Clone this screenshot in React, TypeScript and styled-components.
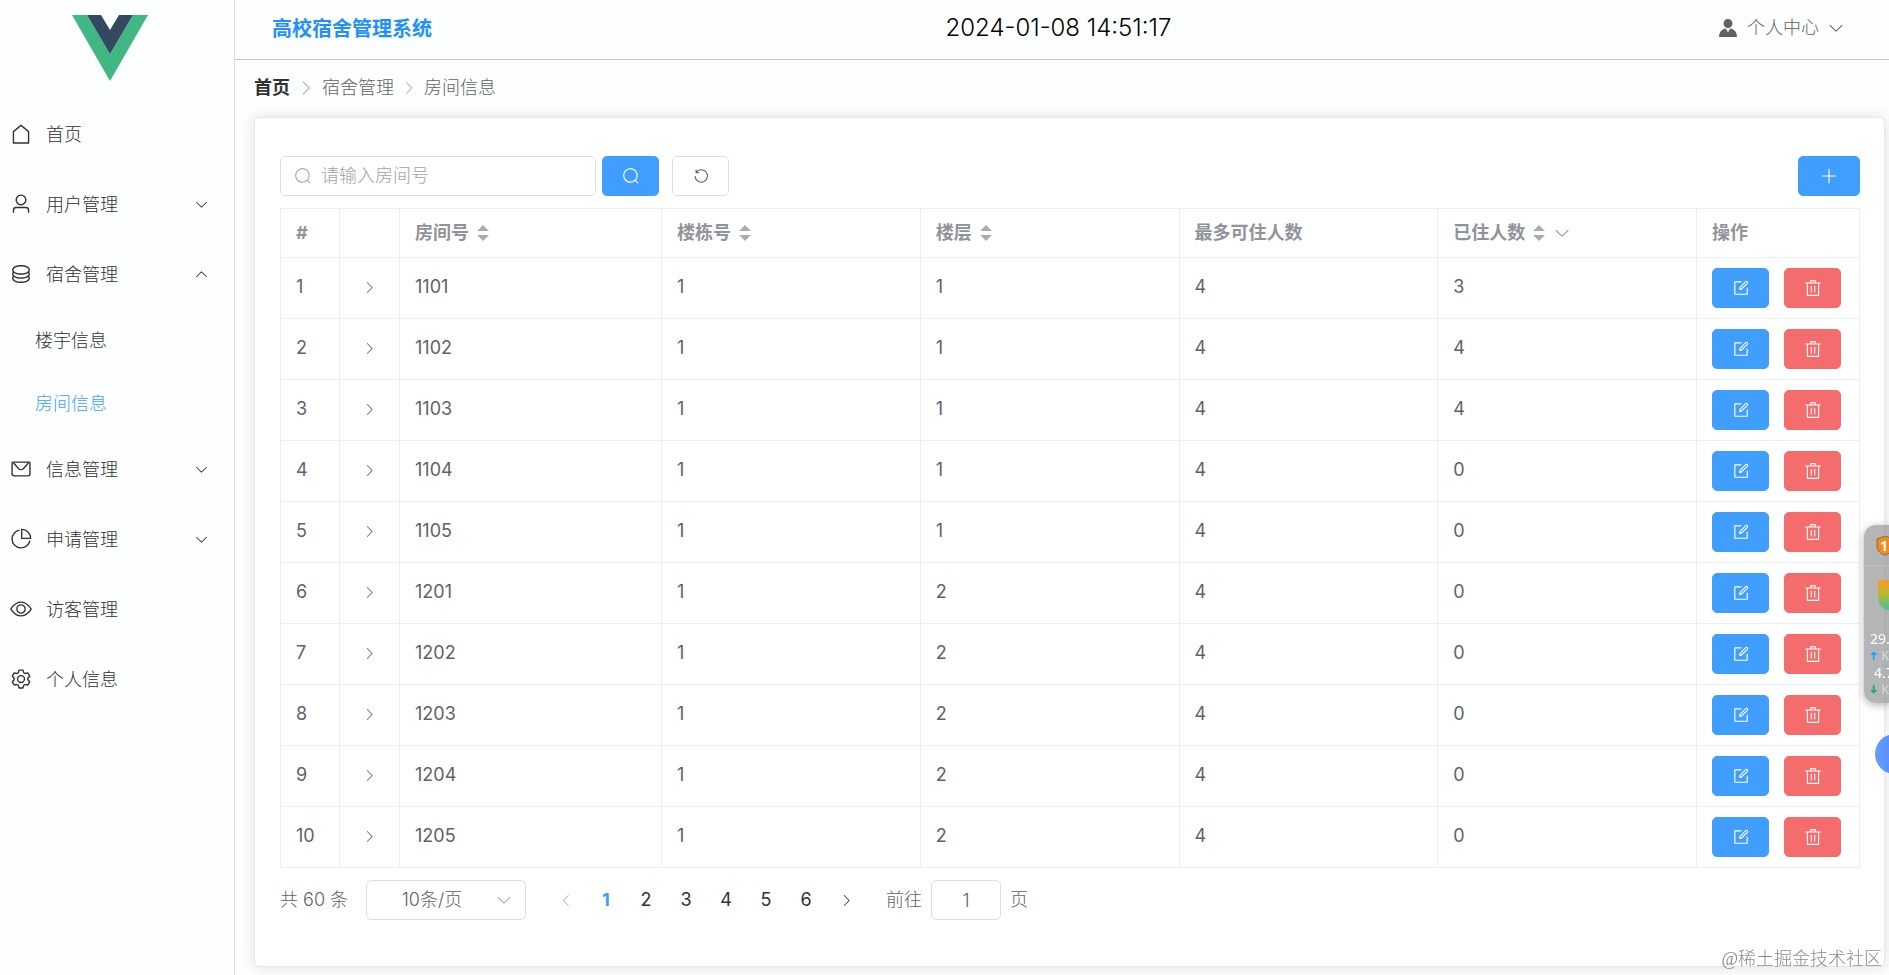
import React, { useState } from 'react';
import styled, { createGlobalStyle, css } from 'styled-components';

const GlobalStyle = createGlobalStyle`
  * { box-sizing: border-box; }
  html, body, #root { min-height: 100vh; }
  body {
    margin: 0;
    overflow: hidden;
    background: #fdfefe;
    color: #606266;
    font: 300 18px/28px Inter, "Noto Sans CJK SC", sans-serif;
  }
  button, input, select { font: inherit; color: inherit; }
  button { cursor: pointer; }
  a { color: inherit; text-decoration: none; }
`;

/* ---------- icons ---------- */

const paths = {
  home: <path d="M192 413.952V896h640V413.952L512 147.328zM139.52 374.4l352-293.312a32 32 0 0 1 40.96 0l352 293.312A32 32 0 0 1 896 398.976V928a32 32 0 0 1-32 32H160a32 32 0 0 1-32-32V398.976a32 32 0 0 1 11.52-24.576" />,
  user: <path d="M512 512a192 192 0 1 0 0-384 192 192 0 0 0 0 384m0 64a256 256 0 1 1 0-512 256 256 0 0 1 0 512m320 320v-96a96 96 0 0 0-96-96H288a96 96 0 0 0-96 96v96a32 32 0 1 1-64 0v-96a160 160 0 0 1 160-160h448a160 160 0 0 1 160 160v96a32 32 0 1 1-64 0" />,
  coin: (
    <>
      <path d="m161.92 580.736 29.888 58.88C171.328 659.776 160 681.728 160 704c0 82.304 155.328 160 352 160s352-77.696 352-160c0-22.272-11.392-44.16-31.808-64.32l30.464-58.432C903.936 615.808 928 657.664 928 704c0 129.728-188.544 224-416 224S96 833.728 96 704c0-46.592 24.32-88.576 65.92-123.264z" />
      <path d="m161.92 388.736 29.888 58.88C171.328 467.84 160 489.792 160 512c0 82.304 155.328 160 352 160s352-77.696 352-160c0-22.272-11.392-44.16-31.808-64.32l30.464-58.432C903.936 423.808 928 465.664 928 512c0 129.728-188.544 224-416 224S96 641.728 96 512c0-46.592 24.32-88.576 65.92-123.264z" />
      <path d="M512 544c-227.456 0-416-94.272-416-224S284.544 96 512 96s416 94.272 416 224-188.544 224-416 224m0-64c196.672 0 352-77.696 352-160S708.672 160 512 160s-352 77.696-352 160 155.328 160 352 160" />
    </>
  ),
  message: (
    <>
      <path d="M128 224v512a64 64 0 0 0 64 64h640a64 64 0 0 0 64-64V224zm0-64h768a64 64 0 0 1 64 64v512a128 128 0 0 1-128 128H192A128 128 0 0 1 64 736V224a64 64 0 0 1 64-64" />
      <path d="M904 224 656.512 506.88a192 192 0 0 1-289.024 0L120 224zm-698.944 0 210.56 240.704a128 128 0 0 0 192.704 0L818.944 224z" />
    </>
  ),
  pie: (
    <>
      <path d="M448 68.48v64.832A384.128 384.128 0 0 0 512 896a384.128 384.128 0 0 0 378.688-320h64.768A448.128 448.128 0 0 1 64 512 448.128 448.128 0 0 1 448 68.48z" />
      <path d="M576 97.28V448h350.72A384.064 384.064 0 0 0 576 97.28zM512 64V33.152A448 448 0 0 1 990.848 512H512z" />
    </>
  ),
  view: <path d="M512 160c320 0 512 352 512 352S832 864 512 864 0 512 0 512s192-352 512-352m0 64c-225.28 0-384.128 208.064-436.8 288 52.608 79.872 211.456 288 436.8 288 225.28 0 384.128-208.064 436.8-288-52.608-79.872-211.456-288-436.8-288m0 64a224 224 0 1 1 0 448 224 224 0 0 1 0-448m0 64a160.192 160.192 0 0 0-160 160c0 88.192 71.744 160 160 160s160-71.808 160-160-71.744-160-160-160" />,
  setting: <path d="M600.704 64a32 32 0 0 1 30.464 22.208l35.2 109.376c14.784 7.232 28.928 15.36 42.432 24.512l112.384-24.192a32 32 0 0 1 34.432 15.36L944.32 364.8a32 32 0 0 1-4.032 37.504l-77.12 85.12a357 357 0 0 1 0 49.024l77.12 85.248a32 32 0 0 1 4.032 37.504l-88.704 153.6a32 32 0 0 1-34.432 15.296L708.8 803.904c-13.44 9.088-27.648 17.28-42.368 24.512l-35.264 109.376A32 32 0 0 1 600.704 960H423.296a32 32 0 0 1-30.464-22.208L357.696 828.48a352 352 0 0 1-42.56-24.64l-112.32 24.256a32 32 0 0 1-34.432-15.36L79.68 659.2a32 32 0 0 1 4.032-37.504l77.12-85.248a357 357 0 0 1 0-48.896l-77.12-85.248A32 32 0 0 1 79.68 364.8l88.704-153.6a32 32 0 0 1 34.432-15.296l112.32 24.256c13.568-9.152 27.776-17.408 42.56-24.64l35.2-109.312A32 32 0 0 1 423.232 64H600.64zm-23.424 64H446.72l-36.352 113.088-24.512 11.968a294 294 0 0 0-34.816 20.096l-22.656 15.36-116.224-25.088-65.28 113.152 79.68 88.192-1.92 27.136a293 293 0 0 0 0 40.192l1.92 27.136-79.808 88.192 65.344 113.152 116.224-25.024 22.656 15.296a294 294 0 0 0 34.816 20.096l24.512 11.968L446.72 896h130.688l36.48-113.152 24.448-11.904a288 288 0 0 0 34.752-20.096l22.592-15.296 116.288 25.024 65.28-113.152-79.744-88.192 1.92-27.136a293 293 0 0 0 0-40.256l-1.92-27.136 79.808-88.128-65.344-113.152-116.288 24.96-22.592-15.232a288 288 0 0 0-34.752-20.096l-24.448-11.904L577.344 128zM512 320a192 192 0 1 1 0 384 192 192 0 0 1 0-384m0 64a128 128 0 1 0 0 256 128 128 0 0 0 0-256" />,
  down: <path d="M831.872 340.864 512 652.672 192.128 340.864a30.592 30.592 0 0 0-42.752 0 29.12 29.12 0 0 0 0 41.6L489.664 714.24a32 32 0 0 0 44.672 0l340.288-331.712a29.12 29.12 0 0 0 0-41.728 30.592 30.592 0 0 0-42.752 0z" />,
  up: <path d="M831.872 683.136 512 371.328 192.128 683.136a30.592 30.592 0 0 1-42.752 0 29.12 29.12 0 0 1 0-41.6L489.664 309.76a32 32 0 0 1 44.672 0l340.288 331.712a29.12 29.12 0 0 1 0 41.728 30.592 30.592 0 0 1-42.752 0z" />,
  right: <path d="M340.864 149.312a30.59 30.59 0 0 0 0 42.752L652.736 512 340.864 831.872a30.59 30.59 0 0 0 0 42.752 29.12 29.12 0 0 0 41.728 0L714.24 534.336a32 32 0 0 0 0-44.672L382.592 149.376a29.12 29.12 0 0 0-41.728 0z" />,
  left: <path d="M609.408 149.376 277.76 489.6a32 32 0 0 0 0 44.672l331.648 340.352a29.12 29.12 0 0 0 41.728 0 30.59 30.59 0 0 0 0-42.752L339.264 511.936l311.872-319.872a30.59 30.59 0 0 0 0-42.688 29.12 29.12 0 0 0-41.728 0" />,
  search: <path d="m795.904 750.72 124.992 124.928a32 32 0 0 1-45.248 45.248L750.656 795.904a416 416 0 1 1 45.248-45.248zM480 832a352 352 0 1 0 0-704 352 352 0 0 0 0 704" />,
  refresh: <path d="M289.088 296.704h92.992a32 32 0 0 1 0 64H232.96a32 32 0 0 1-32-32V179.712a32 32 0 0 1 64 0v50.56a384 384 0 0 1 643.84 282.88 384 384 0 0 1-383.936 384 384 384 0 0 1-384-384h64a320 320 0 1 0 640 0 320 320 0 0 0-555.712-216.448z" />,
  plus: <path d="M480 480V128a32 32 0 0 1 64 0v352h352a32 32 0 1 1 0 64H544v352a32 32 0 1 1-64 0V544H128a32 32 0 0 1 0-64z" />,
  edit: (
    <>
      <path d="M832 512a32 32 0 1 1 64 0v352a32 32 0 0 1-32 32H160a32 32 0 0 1-32-32V160a32 32 0 0 1 32-32h352a32 32 0 0 1 0 64H192v640h640z" />
      <path d="m469.952 554.24 52.8-7.552L847.104 222.4a32 32 0 1 0-45.248-45.248L477.44 501.44l-7.552 52.8zm422.4-422.4a96 96 0 0 1 0 135.808l-331.84 331.84a32 32 0 0 1-18.112 9.088L436.8 623.68a32 32 0 0 1-36.224-36.224l15.104-105.6a32 32 0 0 1 9.024-18.112l331.904-331.84a96 96 0 0 1 135.744 0z" />
    </>
  ),
  trash: <path d="M160 256H96a32 32 0 0 1 0-64h256V95.936a32 32 0 0 1 32-32h256a32 32 0 0 1 32 32V192h256a32 32 0 1 1 0 64h-64v672a32 32 0 0 1-32 32H192a32 32 0 0 1-32-32zm448-64v-64H416v64zM224 896h576V256H224zm192-128a32 32 0 0 1-32-32V416a32 32 0 0 1 64 0v320a32 32 0 0 1-32 32m192 0a32 32 0 0 1-32-32V416a32 32 0 0 1 64 0v320a32 32 0 0 1-32 32" />,
  avatar: <path d="M628.736 528.896A416 416 0 0 1 928 928H96a415.87 415.87 0 0 1 299.264-399.104L512 704zM720 304a208 208 0 1 1-416 0 208 208 0 0 1 416 0" />,
  sort: <path fill="#a8abb2" d="M512 60 850 400H174zM512 964 174 624h676z" />,
};

type IconName = keyof typeof paths;

const Svg = styled.svg<{ $size: number }>`
  display: block;
  flex: none;
  width: ${(p) => p.$size}px;
  height: ${(p) => p.$size}px;
  fill: currentColor;
`;

const Icon = ({ name, size = 18 }: { name: IconName; size?: number }) => (
  <Svg $size={size} viewBox="0 0 1024 1024" aria-hidden="true">{paths[name]}</Svg>
);

/* ---------- frame ---------- */

const Page = styled.div`
  display: flex;
  min-height: 100vh;
`;

const Sidebar = styled.aside`
  flex: 0 0 235px;
  border-right: 1px solid #dcdfe6;
  color: #303133;
`;

const LogoBox = styled.div`
  display: flex;
  justify-content: center;
  height: 99px;
  padding: 15px 15px 0 0;
`;

const Menu = styled.ul`
  margin: 0;
  padding: 0;
  list-style: none;
`;

const menuRow = css`
  display: flex;
  align-items: center;
  width: 100%;
  border: 0;
  background: none;
  text-align: left;
`;

const MenuLink = styled.a`
  ${menuRow}
  height: 70px;
  padding: 0 25px 0 10px;
  gap: 14px;
`;

const MenuToggle = styled.button`
  ${menuRow}
  height: 70px;
  padding: 0 25px 0 10px;
  gap: 14px;
`;

const MenuText = styled.span`
  flex: 1;
  padding-top: 2px;
`;

const SubMenu = styled(Menu)`
  display: flex;
  flex-direction: column;
  height: 125px;
`;

const SubItem = styled.li`
  display: flex;
  flex: 1;
`;

const SubLink = styled.a<{ $active?: boolean }>`
  ${menuRow}
  padding: 2px 0 0 35px;
  color: ${(p) => (p.$active ? '#409eff' : 'inherit')};
`;

const Main = styled.div`
  display: flex;
  flex: 1;
  flex-direction: column;
  min-width: 0;
`;

const Header = styled.header`
  display: grid;
  grid-template-columns: 1fr auto 1fr;
  align-items: center;
  height: 60px;
  padding: 0 44px 4px 37px;
  border-bottom: 1px solid #c0c4cc;
`;

const Title = styled.h1`
  margin: 0;
  padding-top: 2px;
  color: #1e90ff;
  font-size: 20px;
  font-weight: 700;
`;

const Clock = styled.time`
  color: #000;
  font-size: 24px;
`;

const Account = styled.button`
  display: flex;
  align-items: center;
  justify-self: end;
  gap: 8px;
  padding: 0;
  border: 0;
  background: none;
`;

const Content = styled.main`
  display: flex;
  flex: 1;
  flex-direction: column;
  padding: 14px 4px 8px 19px;
`;

const Crumbs = styled.nav`
  display: flex;
  align-items: center;
  gap: 7px;
  height: 28px;
  margin-bottom: 15px;
  color: #a8abb2;
`;

const Crumb = styled.a<{ $home?: boolean }>`
  color: ${(p) => (p.$home ? '#303133' : '#606266')};
  font-weight: ${(p) => (p.$home ? 700 : 300)};
`;

const Card = styled.section`
  flex: 1;
  padding: 38px 24px 24px 25px;
  border: 1px solid #e4e7ed;
  border-radius: 5px;
  background: #fff;
  box-shadow: 0 0 15px rgba(0, 0, 0, 0.12);
`;

/* ---------- controls ---------- */

const Toolbar = styled.form`
  display: flex;
  align-items: center;
  margin-bottom: 12px;
`;

const SearchField = styled.label`
  display: flex;
  align-items: center;
  gap: 9px;
  width: 316px;
  height: 40px;
  margin-right: 6px;
  padding: 0 13px;
  border: 1px solid #dcdfe6;
  border-radius: 5px;
  color: #a8abb2;
`;

const SearchInput = styled.input`
  flex: 1;
  min-width: 0;
  padding: 0;
  border: 0;
  outline: 0;
  background: none;
  &::placeholder { color: #a0a3aa; opacity: 1; }
`;

const tones = {
  primary: css`border-color: #409eff; background: #409eff; color: #fff;`,
  danger: css`border-color: #f56c6c; background: #f56c6c; color: #fff;`,
  plain: css`border-color: #dcdfe6; background: #fff; color: #606266;`,
};

const Button = styled.button<{ $tone: keyof typeof tones; $wide?: boolean }>`
  display: flex;
  align-items: center;
  justify-content: center;
  width: ${(p) => (p.$wide ? 62 : 57)}px;
  height: 40px;
  padding: 0;
  border: 1px solid;
  border-radius: 5px;
  ${(p) => tones[p.$tone]}
`;

const Spacer = styled.span<{ $grow?: boolean }>`
  flex: ${(p) => (p.$grow ? '1' : '0 0 13px')};
`;

/* ---------- table ---------- */

const Table = styled.table`
  width: 100%;
  border-collapse: collapse;
  table-layout: fixed;
`;

const Col = styled.col<{ $w?: string }>`
  width: ${(p) => p.$w ?? 'auto'};
`;

const Th = styled.th`
  height: 49px;
  padding: 0 0 0 15px;
  border: 1px solid #ebeef5;
  color: #909399;
  font-weight: 700;
  text-align: left;
`;

const HeadLabel = styled.span`
  display: flex;
  align-items: center;
  gap: 5px;
`;

const Td = styled.td`
  height: 61px;
  padding: 0 0 0 15px;
  border: 1px solid #ebeef5;
`;

const Value = styled.div`
  padding-bottom: 2px;
  font-weight: 400;
`;

const Expand = styled.button`
  display: flex;
  padding: 0 0 2px 7px;
  border: 0;
  background: none;
`;

const Actions = styled.div`
  display: flex;
  gap: 15px;
`;

/* ---------- pagination ---------- */

const Pager = styled.nav`
  display: flex;
  align-items: center;
  height: 40px;
  margin-top: 12px;
`;

const Total = styled.span`
  width: 86px;
`;

const SelectBox = styled.label`
  position: relative;
  display: flex;
  align-items: center;
  width: 160px;
  height: 40px;
  margin-right: 20px;
  color: #a8abb2;
`;

const SizeSelect = styled.select`
  width: 100%;
  height: 40px;
  padding: 0 48px 0 20px;
  border: 1px solid #dcdfe6;
  border-radius: 5px;
  background: none;
  color: #606266;
  text-align: center;
  text-align-last: center;
  appearance: none;
`;

const SelectArrow = styled.span`
  position: absolute;
  right: 13px;
  pointer-events: none;
`;

const PageButton = styled.button<{ $active?: boolean; $muted?: boolean }>`
  display: flex;
  align-items: center;
  justify-content: center;
  width: 40px;
  height: 40px;
  padding: 0;
  border: 0;
  background: none;
  color: ${(p) => (p.$active ? '#409eff' : p.$muted ? '#a8abb2' : '#303133')};
  font-weight: ${(p) => (p.$active ? 700 : 400)};
`;

const Jump = styled.label`
  display: flex;
  align-items: center;
  gap: 9px;
  margin-left: 20px;
`;

const JumpInput = styled.input`
  width: 70px;
  height: 40px;
  padding: 0;
  border: 1px solid #dcdfe6;
  border-radius: 5px;
  background: #fff;
  text-align: center;
`;

/* ---------- floating overlays ---------- */

const Monitor = styled.div`
  position: fixed;
  top: 525px;
  right: 0;
  width: 25px;
  height: 178px;
  border-radius: 12px 0 0 12px;
  background: rgba(150, 152, 155, 0.72);
  box-shadow: 0 2px 8px rgba(0, 0, 0, 0.3);
  color: #fff;
  font: 400 14px/17px "Noto Sans", sans-serif;
  overflow: hidden;
`;

const MonitorHead = styled.div`
  height: 41px;
  padding: 11px 0 0 12px;
  border-bottom: 1px solid rgba(255, 255, 255, 0.15);
`;

const Tube = styled.div`
  width: 24px;
  height: 30px;
  margin: 14px 0 20px 14px;
  border-radius: 0 0 12px 12px;
  background: linear-gradient(#f39a2b, #c8b52a 40%, #3fc6a0);
`;

const Rate = styled.div<{ $short?: boolean }>`
  padding-left: ${(p) => (p.$short ? 10 : 6)}px;
  white-space: nowrap;
`;

const RateUnit = styled.div`
  display: flex;
  align-items: center;
  gap: 4px;
  padding-left: 6px;
  color: #dcdcdc;
  font-size: 12px;
`;

const Bubble = styled.div`
  position: fixed;
  top: 734px;
  right: -26px;
  width: 40px;
  height: 40px;
  border-radius: 50%;
  background: linear-gradient(90deg, #699bff, #4080ff);
`;

const Watermark = styled.div`
  position: fixed;
  right: 7px;
  bottom: 2px;
  color: rgba(110, 110, 110, 0.8);
  font: 300 18px/28px "Liberation Serif", "Noto Sans CJK SC", serif;
`;

const Logo = () => (
  <svg width="76" height="66" viewBox="0 0 76 66" role="img" aria-label="Vue">
    <path fill="#41b883" d="M0 0h15l23 39L61 0h15L38 66z" />
    <path fill="#34495e" d="M15 0h14l9 15 9-15h14L38 39z" />
  </svg>
);

const rooms = [
  ['1101', 1, 3], ['1102', 1, 4], ['1103', 1, 4], ['1104', 1, 0], ['1105', 1, 0],
  ['1201', 2, 0], ['1202', 2, 0], ['1203', 2, 0], ['1204', 2, 0], ['1205', 2, 0],
] as const;

const headings: { text: string; sort?: boolean; filter?: boolean }[] = [
  { text: '#' },
  { text: '' },
  { text: '房间号', sort: true },
  { text: '楼栋号', sort: true },
  { text: '楼层', sort: true },
  { text: '最多可住人数' },
  { text: '已住人数', sort: true, filter: true },
  { text: '操作' },
];

const Group = ({ icon, text, open }: { icon: IconName; text: string; open?: boolean }) => (
  <MenuToggle type="button" aria-expanded={!!open}>
    <Icon name={icon} size={22} />
    <MenuText>{text}</MenuText>
    <Icon name={open ? 'up' : 'down'} size={15} />
  </MenuToggle>
);

const Leaf = ({ icon, text }: { icon: IconName; text: string }) => (
  <MenuLink href="#">
    <Icon name={icon} size={22} />
    <MenuText>{text}</MenuText>
  </MenuLink>
);

export default function App() {
  const [page, setPage] = useState(1);
  return (
    <>
      <GlobalStyle />
      <Page>
        <Sidebar>
          <LogoBox><Logo /></LogoBox>
          <Menu>
            <li><Leaf icon="home" text="首页" /></li>
            <li><Group icon="user" text="用户管理" /></li>
            <li>
              <Group icon="coin" text="宿舍管理" open />
              <SubMenu>
                <SubItem><SubLink href="#">楼宇信息</SubLink></SubItem>
                <SubItem><SubLink href="#" $active>房间信息</SubLink></SubItem>
              </SubMenu>
            </li>
            <li><Group icon="message" text="信息管理" /></li>
            <li><Group icon="pie" text="申请管理" /></li>
            <li><Leaf icon="view" text="访客管理" /></li>
            <li><Leaf icon="setting" text="个人信息" /></li>
          </Menu>
        </Sidebar>
        <Main>
          <Header>
            <Title>高校宿舍管理系统</Title>
            <Clock>2024-01-08 14:51:17</Clock>
            <Account type="button">
              <Icon name="avatar" size={22} />
              个人中心
              <Icon name="down" size={18} />
            </Account>
          </Header>
          <Content>
            <Crumbs aria-label="位置">
              <Crumb href="#" $home>首页</Crumb>
              <Icon name="right" />
              <Crumb href="#">宿舍管理</Crumb>
              <Icon name="right" size={16} />
              <Crumb href="#">房间信息</Crumb>
            </Crumbs>
            <Card>
              <Toolbar onSubmit={(e) => e.preventDefault()}>
                <SearchField>
                  <Icon name="search" />
                  <SearchInput placeholder="请输入房间号" aria-label="房间号" />
                </SearchField>
                <Button $tone="primary" aria-label="搜索"><Icon name="search" /></Button>
                <Spacer />
                <Button $tone="plain" type="reset" aria-label="重置"><Icon name="refresh" /></Button>
                <Spacer $grow />
                <Button $tone="primary" $wide type="button" aria-label="新增"><Icon name="plus" /></Button>
              </Toolbar>
              <Table>
                <colgroup>
                  <Col $w="59px" /><Col $w="60px" /><Col $w="16.6%" />
                  <Col /><Col /><Col /><Col /><Col $w="163px" />
                </colgroup>
                <thead>
                  <tr>
                    {headings.map((h, i) => (
                      <Th key={i} scope="col">
                        <HeadLabel>
                          {h.text}
                          {h.sort && <Icon name="sort" />}
                          {h.filter && <Icon name="down" />}
                        </HeadLabel>
                      </Th>
                    ))}
                  </tr>
                </thead>
                <tbody>
                  {rooms.map(([room, floor, used], i) => (
                    <tr key={room}>
                      <Td><Value>{i + 1}</Value></Td>
                      <Td><Expand type="button" aria-label="展开"><Icon name="right" size={15} /></Expand></Td>
                      <Td><Value>{room}</Value></Td>
                      <Td><Value>1</Value></Td>
                      <Td><Value>{floor}</Value></Td>
                      <Td><Value>4</Value></Td>
                      <Td><Value>{used}</Value></Td>
                      <Td>
                        <Actions>
                          <Button $tone="primary" type="button" aria-label="编辑"><Icon name="edit" /></Button>
                          <Button $tone="danger" type="button" aria-label="删除"><Icon name="trash" /></Button>
                        </Actions>
                      </Td>
                    </tr>
                  ))}
                </tbody>
              </Table>
              <Pager aria-label="分页">
                <Total>共 60 条</Total>
                <SelectBox>
                  <SizeSelect aria-label="每页条数"><option>10条/页</option></SizeSelect>
                  <SelectArrow><Icon name="down" /></SelectArrow>
                </SelectBox>
                <PageButton type="button" $muted aria-label="上一页"><Icon name="left" size={15} /></PageButton>
                {[1, 2, 3, 4, 5, 6].map((n) => (
                  <PageButton key={n} type="button" $active={n === page} onClick={() => setPage(n)}>{n}</PageButton>
                ))}
                <PageButton type="button" aria-label="下一页"><Icon name="right" size={15} /></PageButton>
                <Jump>
                  前往
                  <JumpInput value={page} readOnly />
                  页
                </Jump>
              </Pager>
            </Card>
          </Content>
        </Main>
      </Page>
      <Monitor>
        <MonitorHead>
          <svg width="18" height="20" viewBox="0 0 18 20">
            <path d="M9 0l8 3v7c0 5-4 8-8 9-4-1-8-4-8-9V3z" fill="#f28c1e" stroke="#8a6a40" />
            <text x="8" y="15" textAnchor="middle" fontSize="14" fontWeight="700" fill="#fff">1</text>
          </svg>
        </MonitorHead>
        <Tube />
        <Rate>29.</Rate>
        <RateUnit>
          <svg width="8" height="9" viewBox="0 0 8 9"><path d="M4 0l4 4H5v5H3V4H0z" fill="#1aa8ff" /></svg>
          K
        </RateUnit>
        <Rate $short>4.7</Rate>
        <RateUnit>
          <svg width="8" height="9" viewBox="0 0 8 9"><path d="M4 9l4-4H5V0H3v5H0z" fill="#0cb56b" /></svg>
          K
        </RateUnit>
      </Monitor>
      <Bubble />
      <Watermark>@稀土掘金技术社区</Watermark>
    </>
  );
}
